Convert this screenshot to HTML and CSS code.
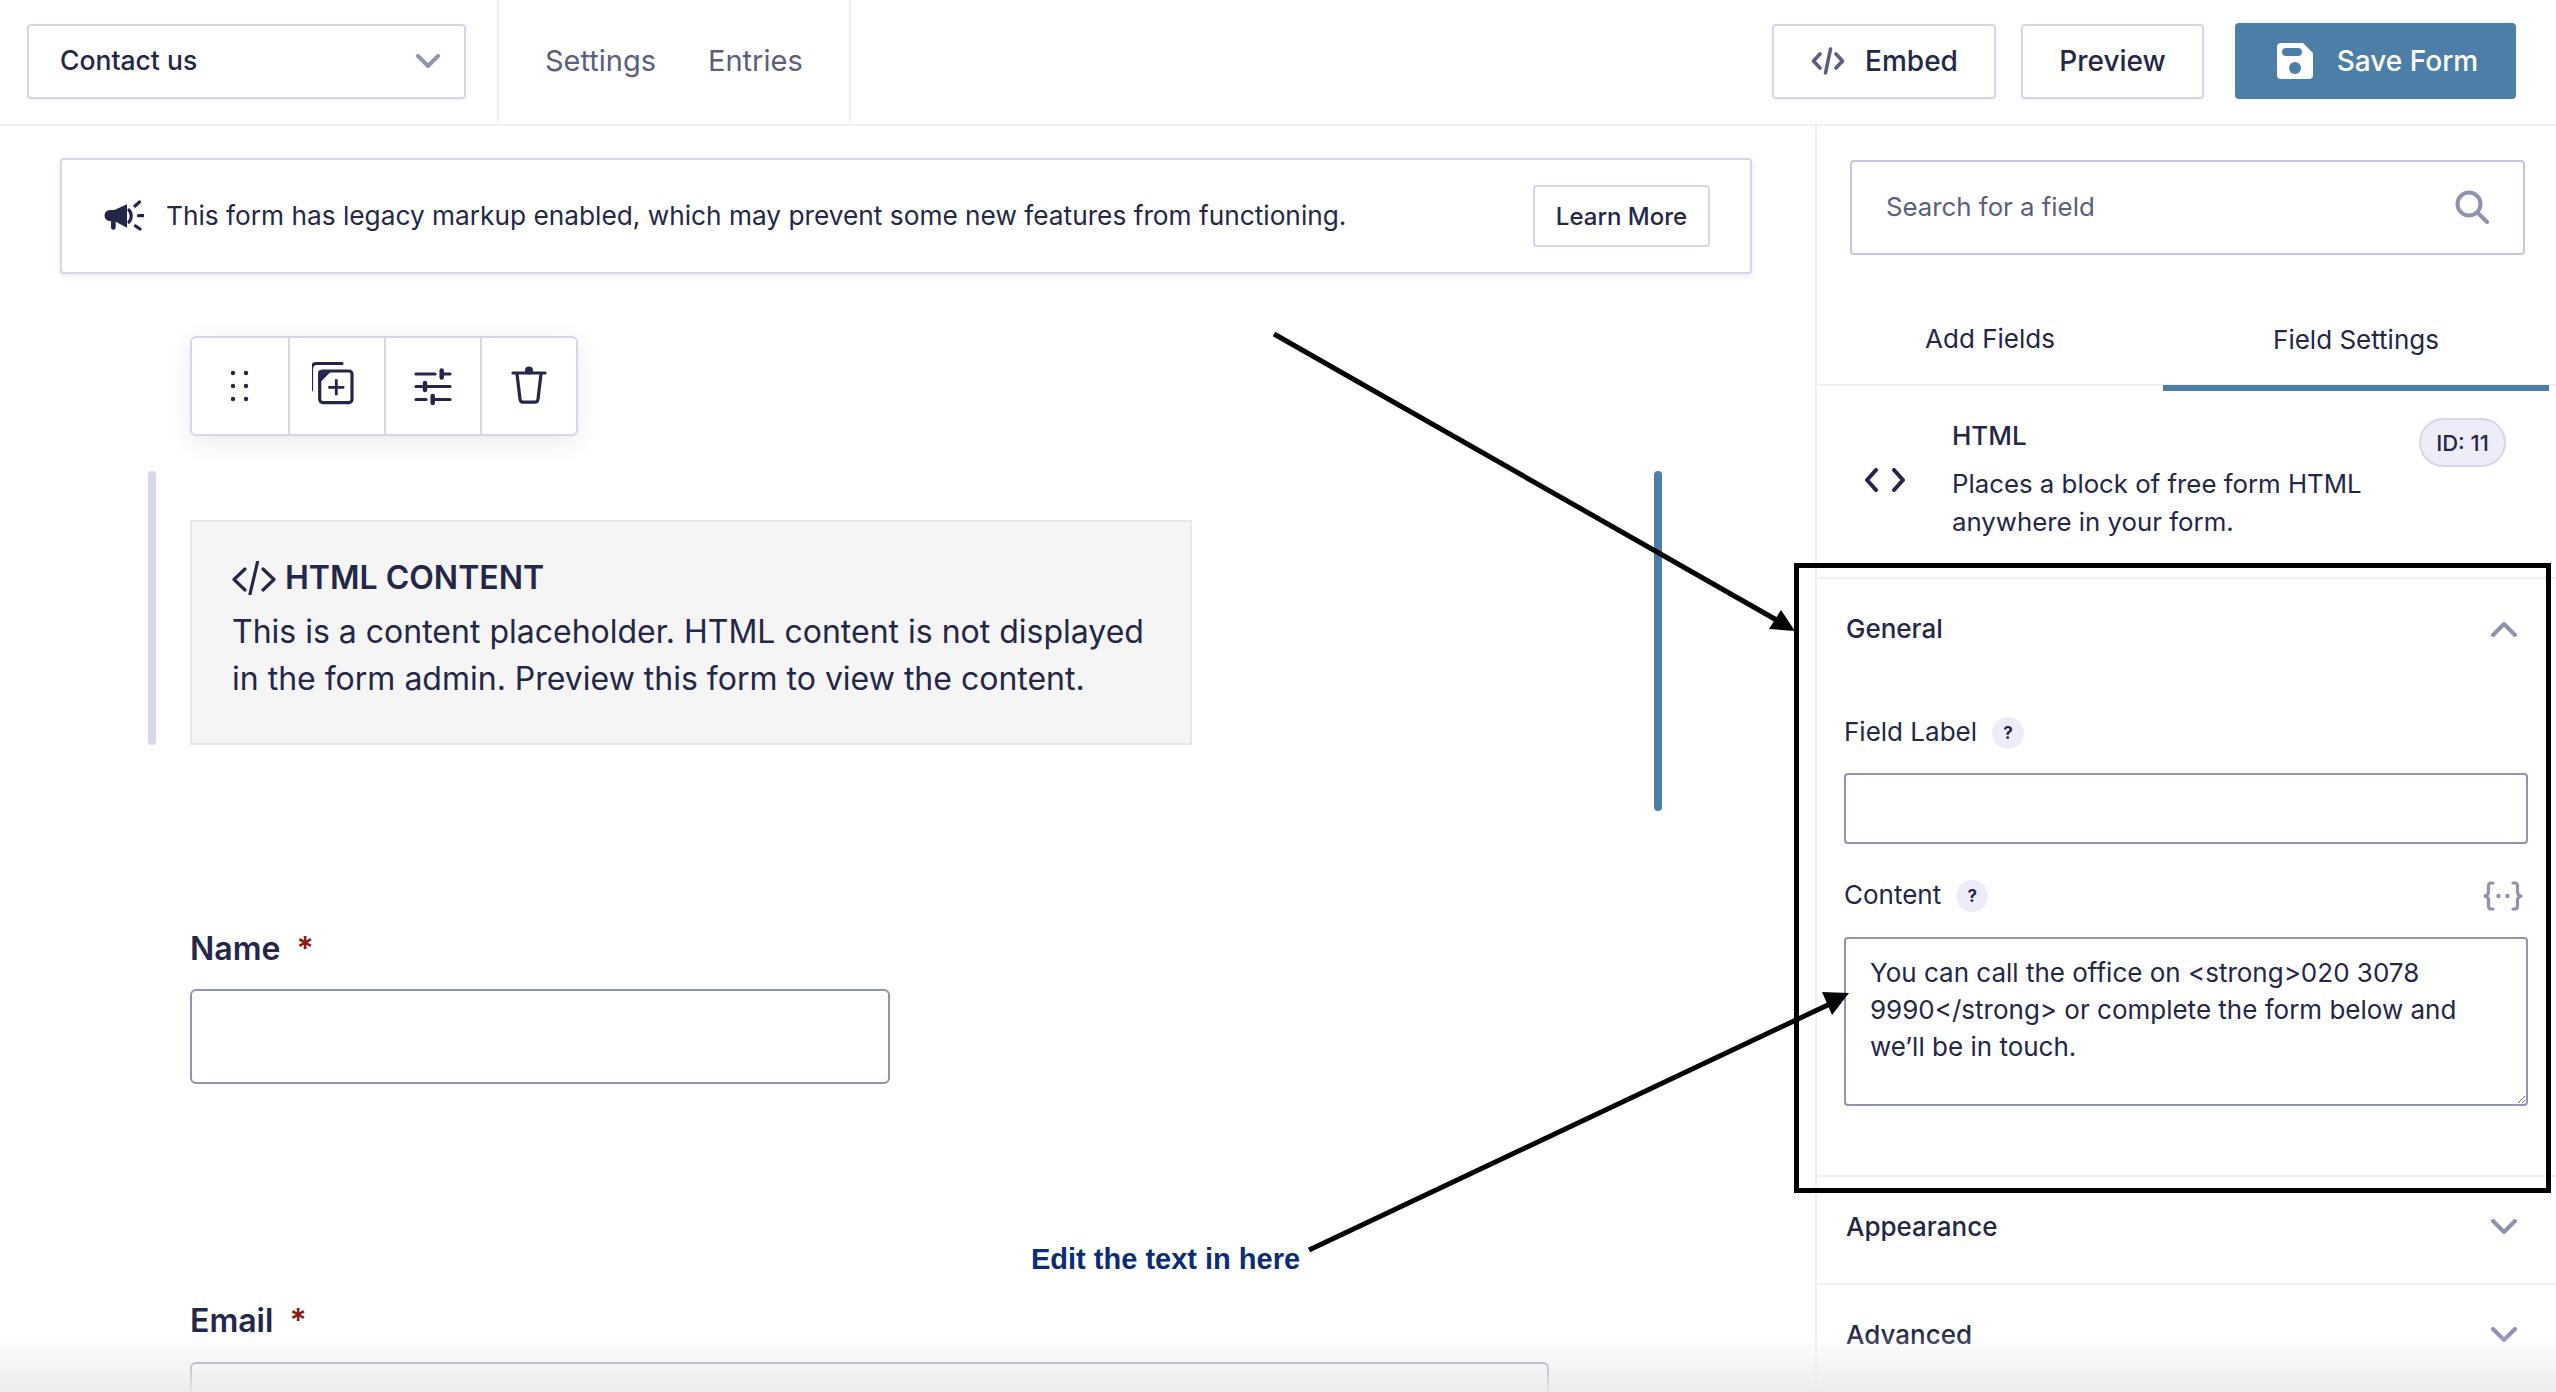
FILE: index.html
```html
<!DOCTYPE html>
<html lang="en">
<head>
<meta charset="utf-8">
<title>Contact us - Form Editor</title>
<link rel="stylesheet" href="styles.css">
</head>
<body>
<div class="page">
  <header class="topbar">
    <div class="form-select">
      <span>Contact us</span>
      <svg class="chev-select" width="24" height="14" viewBox="0 0 24 14"><path d="M2 2l10 10L22 2" class="stroke-muted bold"/></svg>
    </div>
    <nav class="topnav">
      <a>Settings</a>
      <a>Entries</a>
    </nav>
    <div class="actions">
      <button class="btn btn-embed">
        <svg width="34" height="28" viewBox="0 0 34 28"><path d="M9 7L2.500 14 9 21M25 7l6.500 7L25 21M19.500 2l-5 24" class="stroke-soft"/></svg>
        Embed
      </button>
      <button class="btn btn-preview">Preview</button>
      <button class="btn btn-save">
        <svg width="36" height="36" viewBox="0 0 36 36"><path d="M4 0h22l10 10v22a4 4 0 0 1-4 4H4a4 4 0 0 1-4-4V4a4 4 0 0 1 4-4z" fill="#fff"/><rect x="5" y="5" width="20" height="8" rx="4" fill="#4d7ea8"/><circle cx="18" cy="25" r="6" fill="#4d7ea8"/></svg>
        Save Form
      </button>
    </div>
  </header>

  <div class="workspace">
    <main class="canvas">
      <div class="notice">
        <svg class="notice-icon" width="40" height="36" viewBox="0 0 40 36">
          <path d="M6 12h4.300L23 6.300v23.400L10.300 23H11.700v6.500a1.800 1.800 0 0 1-4.700 0V23H6a5.500 5.500 0 0 1 0-11z" fill="#24264a"/>
          <path d="M25 12c3 3 3 9 0 12" class="stroke-dark"/>
          <path d="M31 8l4.500-4M34.500 17.700h5M31.500 28l4.500 3" class="stroke-dark"/>
        </svg>
        <p>This form has legacy markup enabled, which may prevent some new features from functioning.</p>
        <button class="btn-learn">Learn More</button>
      </div>

      <div class="field-toolbar">
        <div class="tool">
          <svg width="20" height="32" viewBox="0 0 20 32"><g fill="#24264a"><circle cx="3" cy="3" r="2.200"/><circle cx="16" cy="3" r="2.200"/><circle cx="3" cy="16" r="2.200"/><circle cx="16" cy="16" r="2.200"/><circle cx="3" cy="29" r="2.200"/><circle cx="16" cy="29" r="2.200"/></g></svg>
        </div>
        <div class="tool">
          <svg width="50" height="50" viewBox="4 1 50 50">
            <path d="M3.500 30V9Q3.500 3.500 9 3.500H34" class="stroke-dark"/>
            <rect x="11.700" y="11" width="32.300" height="31.600" rx="3" class="stroke-dark"/>
            <path d="M10.500 10.500H24L10.500 24z" fill="#24264a"/>
            <path d="M28.300 19.300v16M20.300 27.300h16" class="stroke-dark thin"/>
          </svg>
        </div>
        <div class="tool">
          <svg width="40" height="44" viewBox="0 0 40 44">
            <path d="M3 10h19M28.700 10H37M3 22.500h5.700M12 22.500h25M3 35.500h10M19.700 35.500H37" class="stroke-dark"/>
            <path d="M28.700 6.500v7M12 19v7M19.700 32v7" class="stroke-dark knob"/>
          </svg>
        </div>
        <div class="tool">
          <svg width="38" height="44" viewBox="0 0 38 44">
            <path d="M3 9h32" class="stroke-dark"/>
            <circle cx="19" cy="6.500" r="4" fill="#24264a"/>
            <path d="M7 10L10 35Q10.500 38.200 13 38.200H25Q27.500 38.200 28 35L31 10" class="stroke-dark"/>
          </svg>
        </div>
      </div>

      <section class="html-field">
        <span class="bar bar-left"></span>
        <div class="placeholder">
          <h2>
            <svg width="44" height="34" viewBox="0 0 44 34"><path d="M13 8L2 18.500 13 29M31 8l11 10.500L31 29M25.500 1L18 33" class="stroke-dark"/></svg>
            HTML CONTENT
          </h2>
          <p>This is a content placeholder. HTML content is not displayed in the form admin. Preview this form to view the content.</p>
        </div>
        <span class="bar bar-right"></span>
      </section>

      <div class="form-field">
        <label class="form-label">Name <span class="req">*</span></label>
        <div class="form-input input-name"></div>
      </div>
      <div class="form-field field-email">
        <label class="form-label">Email <span class="req">*</span></label>
        <div class="form-input input-email"></div>
      </div>
    </main>

    <aside class="sidebar">
      <div class="search">
        <input type="text" placeholder="Search for a field">
        <svg width="34" height="34" viewBox="0 0 34 34"><circle cx="14" cy="14" r="11.500" class="stroke-muted bold"/><path d="M22.500 22.500L32 32" class="stroke-muted bold"/></svg>
      </div>
      <div class="tabs">
        <a class="tab">Add Fields</a>
        <a class="tab tab-active">Field Settings</a>
      </div>
      <div class="field-info">
        <svg class="info-icon" width="40" height="24" viewBox="0 0 40 24"><path d="M11 2L2 12l9 10M29 2l9 10-9 10" class="stroke-dark bold"/></svg>
        <div class="info-text">
          <h3>HTML</h3>
          <p>Places a block of free form HTML anywhere in your form.</p>
        </div>
        <span class="id-badge">ID: 11</span>
      </div>

      <section class="panel panel-open">
        <div class="panel-head">
          <span>General</span>
          <svg width="26" height="16" viewBox="0 0 26 16"><path d="M2 14L13 3l11 11" class="stroke-muted bold"/></svg>
        </div>
        <div class="set-label label-first"><span>Field Label</span><i class="help">?</i></div>
        <div class="set-input"></div>
        <div class="set-label label-second">
          <span>Content</span><i class="help">?</i>
          <svg class="merge" width="40" height="30" viewBox="0 0 40 30"><path d="M10 2H8Q5.500 2 5.500 5V11Q5.500 14 2 15 5.500 16 5.500 19V25Q5.500 28 8 28H10M30 2H32Q34.500 2 34.500 5V11Q34.500 14 38 15 34.500 16 34.500 19V25Q34.500 28 32 28H30" class="stroke-muted"/><circle cx="15.500" cy="15" r="2.200" fill="#9092b2"/><circle cx="24.500" cy="15" r="2.200" fill="#9092b2"/></svg>
        </div>
        <textarea class="set-area">You can call the office on &lt;strong&gt;020 3078 9990&lt;/strong&gt; or complete the form below and we’ll be in touch.</textarea>
      </section>
      <section class="panel">
        <div class="panel-head">
          <span>Appearance</span>
          <svg width="26" height="16" viewBox="0 0 26 16"><path d="M2 2l11 11L24 2" class="stroke-muted bold"/></svg>
        </div>
      </section>
      <section class="panel">
        <div class="panel-head">
          <span>Advanced</span>
          <svg width="26" height="16" viewBox="0 0 26 16"><path d="M2 2l11 11L24 2" class="stroke-muted bold"/></svg>
        </div>
      </section>
    </aside>
  </div>

  <svg class="annotations" width="2556" height="1392" viewBox="0 0 2556 1392">
    <rect x="1796.500" y="565.500" width="752" height="625" fill="none" stroke="#000" stroke-width="5"/>
    <path d="M1274 334L1780 622" stroke="#000" stroke-width="5" fill="none"/>
    <polygon points="1795,631 1781,610 1769,629" fill="#000"/>
    <path d="M1309 1250L1832 1003" stroke="#000" stroke-width="5" fill="none"/>
    <polygon points="1849,993 1822,992 1832,1015" fill="#000"/>
  </svg>
  <span class="callout">Edit the text in here</span>
  <div class="bottom-fade"></div>
</div>
</body>
</html>
```

FILE: styles.css
```css
* { box-sizing: border-box; }
html, body { margin: 0; padding: 0; background: #fff; }
body { font-family: Inter, "Noto Sans", sans-serif; color: #242748; }

.page { position: relative; width: 2556px; height: 1392px; overflow: hidden; }

.stroke-muted, .stroke-dark, .stroke-soft { fill: none; stroke-width: 3.2; stroke-linecap: round; stroke-linejoin: round; }
.stroke-muted { stroke: #9092b2; }
.stroke-muted.bold { stroke-width: 4; }
.stroke-soft { stroke: #5b5e80; stroke-width: 3.6; }
.stroke-dark { stroke: #24264a; }
.stroke-dark.bold { stroke-width: 4; }
.stroke-dark.thin { stroke-width: 2.8; stroke-linecap: butt; }
.stroke-dark.knob { stroke-width: 4.5; }

/* Top bar */
.topbar { display: flex; align-items: center; height: 126px; padding-bottom: 2px; border-bottom: 2px solid #eeeff7; }
.form-select { display: flex; align-items: center; justify-content: space-between; width: 439px; height: 75px; margin-left: 27px; padding: 0 24px 0 31px; font-size: 26.500px; font-weight: 450; border: 2px solid #d5d7e9; border-radius: 4px; box-shadow: 0 1px 3px rgba(36, 38, 74, .08); }
.form-select span { margin-bottom: 2px; }
.topnav { display: flex; align-items: center; gap: 52px; align-self: stretch; width: 354px; margin: -2px 0 0 31px; padding-left: 46px; border-left: 2px solid #eeeff7; border-right: 2px solid #eeeff7; font-size: 29px; color: #5b5e80; }
.actions { display: flex; align-items: center; gap: 25px; margin-left: auto; padding-right: 40px; }

.btn { display: inline-flex; align-items: center; justify-content: center; height: 75px; font-family: inherit; font-size: 28px; font-weight: 450; color: #242748; background: #fff; border: 2px solid #d5d7e9; border-radius: 4px; box-shadow: 0 1px 3px rgba(36, 38, 74, .08); padding: 0; }
.btn-embed { width: 224px; gap: 20px; padding-left: 1px; }
.btn-preview { width: 183px; }
.btn-save { width: 281px; height: 76px; margin-left: 6px; padding-left: 4px; gap: 24px; color: #fff; background: #4d7ea8; border: 0; box-shadow: none; }

/* Main area */
.workspace { display: grid; grid-template-columns: 1815px 1fr; height: 1266px; }
.canvas { padding: 32px 0 0 60px; }

.notice { display: flex; align-items: center; width: 1692px; height: 116px; padding: 0 40px 0 42px; background: #fff; border: 2px solid #d5d7e9; border-radius: 4px; box-shadow: 0 2px 6px rgba(36, 38, 74, .1); }
.notice-icon { flex: none; margin-right: 22px; }
.notice p { flex: 1; margin: 0 0 1px; font-size: 26.250px; font-weight: 400; }
.btn-learn { width: 177px; height: 62px; padding: 0; font-family: inherit; font-size: 24px; font-weight: 450; color: #242748; background: #fff; border: 2px solid #d5d7e9; border-radius: 4px; }

.field-toolbar { display: grid; grid-template-columns: repeat(4, 96px); width: 388px; height: 100px; margin: 62px 0 0 130px; background: #fff; border: 2px solid #d5d7e9; border-radius: 6px; box-shadow: 0 6px 24px rgba(36, 38, 74, .1); }
.tool { display: flex; align-items: center; justify-content: center; border-left: 2px solid #d5d7e9; }
.tool:first-child { border-left: 0; }

.html-field { display: flex; align-items: flex-start; width: 1514px; margin: 35px 0 0 88px; }
.bar { flex: none; width: 8px; border-radius: 4px; }
.bar-left { height: 274px; background: #d5d7e7; }
.bar-right { height: 340px; margin-left: auto; background: #4d7ea8; }
.placeholder { width: 1002px; height: 225px; margin: 49px 0 0 34px; padding: 31px 40px 0; background: #f5f5f6; border: 2px solid #e7e7e8; }
.placeholder h2 { display: flex; align-items: center; gap: 9px; margin: 0; font-size: 32px; font-weight: 600; line-height: 50px; }
.placeholder p { margin: 5px 0 0; font-size: 32px; line-height: 47px; }

.form-label { display: block; font-size: 32px; font-weight: 600; line-height: 40px; }
.req { margin-left: 8px; color: #8b1a10; }
.form-field { margin: 118px 0 0 130px; }
.field-email { margin-top: 217px; }
.form-input { margin-top: 20px; background: #fff; border: 2px solid #9092b2; border-radius: 6px; }
.input-name { width: 700px; height: 95px; }
.input-email { width: 1359px; height: 100px; margin-top: 21px; }

/* Sidebar */
.sidebar { border-left: 2px solid #eeeff7; }
.search { display: flex; align-items: center; justify-content: space-between; width: 675px; height: 95px; margin: 34px 0 0 33px; padding: 0 34px 2px 34px; border: 2px solid #c3c6dc; border-radius: 4px; }
.search input { flex: 1; padding: 0; font-family: inherit; font-size: 25.800px; color: #5b5e80; background: none; border: 0; outline: 0; }
.search input::placeholder { color: #5b5e80; opacity: 1; }

.tabs { display: flex; height: 131px; padding-right: 7px; border-bottom: 2px solid #eeeff7; }
.tab { display: flex; align-items: center; justify-content: center; height: 129px; padding-top: 38px; font-size: 26px; }
.tab:first-child { width: 346px; }
.tab-active { flex: 1; height: 136px; border-bottom: 6px solid #4d7ea8; }

.field-info { display: flex; height: 191px; padding: 32px 0 0 48px; }
.info-icon { flex: none; margin: 50px 47px 0 0; }
.info-text { width: 467px; }
.info-text h3 { margin: 0; font-size: 26px; font-weight: 500; line-height: 36px; }
.info-text p { margin: 11px 0 0; font-size: 25.800px; line-height: 38px; }
.id-badge { display: flex; flex: none; align-items: center; justify-content: center; width: 87px; height: 49px; font-size: 22px; font-weight: 500; background: #ecedf8; border: 2px solid #d5d7e9; border-radius: 25px; }

.panel { height: 108px; border-top: 2px solid #eeeff7; }
.panel-open { height: 598px; }
.panel-head { display: flex; align-items: center; justify-content: space-between; height: 100px; padding: 0 39px 1px 29px; font-size: 26px; font-weight: 450; }

.set-label { display: flex; align-items: center; gap: 15px; height: 32px; padding-left: 27px; font-size: 26px; }
.set-label span { margin-bottom: 3px; }
.label-first { margin-top: 38px; }
.label-second { margin-top: 36px; }
.help { display: flex; align-items: center; justify-content: center; width: 32px; height: 32px; font-size: 17px; font-weight: 700; font-style: normal; background: #ecedf8; border-radius: 50%; }
.merge { margin: 0 33px 0 auto; }
.set-input { width: 684px; height: 71px; margin: 24px 0 0 27px; border: 2px solid #9092b2; border-radius: 4px; }
.set-area { display: block; width: 684px; height: 169px; margin: 25px 0 0 27px; padding: 15px 24px 0; font-family: inherit; font-size: 26px; line-height: 37px; color: #242748; background: #fff; border: 2px solid #9092b2; border-radius: 4px; outline: 0; }

/* Overlays */
.annotations { position: absolute; top: 0; left: 0; pointer-events: none; }
.callout { position: absolute; left: 1031px; top: 1243px; font-family: "Liberation Sans", Arial, sans-serif; font-size: 29px; font-weight: 700; line-height: 32px; color: #0a2d78; white-space: nowrap; }
.bottom-fade { position: absolute; left: 0; right: 0; bottom: 0; height: 60px; background: linear-gradient(to bottom, rgba(238, 238, 240, 0), rgba(236, 236, 238, .95)); pointer-events: none; }
```
